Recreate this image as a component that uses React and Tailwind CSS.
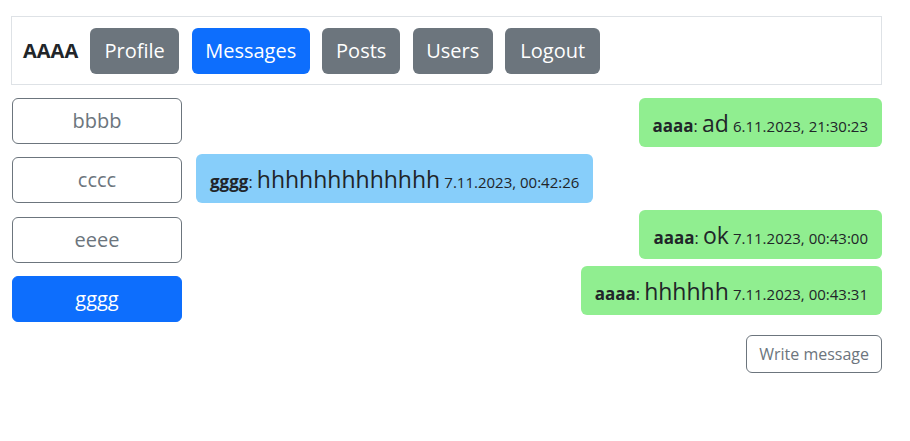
import React from 'react';

const navButtons = [
  { label: 'Profile', width: 'w-[89px]', active: false },
  { label: 'Messages', width: 'w-[118px]', active: true },
  { label: 'Posts', width: 'w-[78px]', active: false },
  { label: 'Users', width: 'w-[80px]', active: false },
  { label: 'Logout', width: 'w-[95px]', active: false },
];

const contacts = [
  { name: 'bbbb', active: false },
  { name: 'cccc', active: false },
  { name: 'eeee', active: false },
  { name: 'gggg', active: true },
];

const messages = [
  { from: 'aaaa', text: 'ad', date: '6.11.2023, 21:30:23', mine: true },
  { from: 'gggg', text: 'hhhhhhhhhhhhh', date: '7.11.2023, 00:42:26', mine: false },
  { from: 'aaaa', text: 'ok', date: '7.11.2023, 00:43:00', mine: true },
  { from: 'aaaa', text: 'hhhhhh', date: '7.11.2023, 00:43:31', mine: true },
];

const App = () => {
  return (
    <div
      className="w-[910px] h-[441px] bg-white text-[#212529] overflow-hidden"
      style={{ fontFamily: '"Open Sans", "Noto Sans", sans-serif' }}
    >
      {/* Top navigation */}
      <nav className="ml-[11px] mt-4 w-[871px] h-[69px] border border-[#dee2e6] flex items-center pl-[11px]">
        <span className="text-[20px] font-bold mr-[12px]">AAAA</span>
        <div className="flex gap-[12.5px]">
          {navButtons.map((b) => (
            <button
              key={b.label}
              className={`${b.width} h-[46px] rounded-md text-[20px] text-white flex items-center justify-center ${
                b.active ? 'bg-[#0d6efd]' : 'bg-[#6c757d]'
              }`}
            >
              {b.label}
            </button>
          ))}
        </div>
      </nav>

      <div className="flex mt-[13px] ml-3 w-[870px] gap-[14px]">
        {/* Contacts */}
        <div className="w-[170px] flex flex-col gap-[13.33px] shrink-0">
          {contacts.map((c) => (
            <button
              key={c.name}
              className={`h-[46px] rounded-md text-[20px] flex items-center justify-center ${
                c.active
                  ? 'bg-[#0d6efd] text-white border border-[#0d6efd]'
                  : 'border border-[#6c757d] text-[#6c757d] bg-white'
              }`}
            >
              {c.name}
            </button>
          ))}
        </div>

        {/* Conversation */}
        <div className="flex-1 flex flex-col">
          <div className="flex flex-col gap-[7px]">
            {messages.map((m, i) => (
              <div key={i} className={`flex ${m.mine ? 'justify-end' : 'justify-start'}`}>
                <div
                  className={`h-[49px] px-[14px] rounded-md flex items-center whitespace-nowrap ${
                    m.mine ? 'bg-[#90ee90]' : 'bg-[#87cefa]'
                  }`}
                >
                  <div className="leading-normal text-base pt-[2px]">
                    <span className="font-bold text-[17px]">{m.from}</span>:{' '}
                    <span className="text-[23px]">{m.text}</span>{' '}
                    <span className="text-[15px]">{m.date}</span>
                  </div>
                </div>
              </div>
            ))}
          </div>
          <div className="flex justify-end mt-5">
            <button className="h-[38px] px-[12px] rounded-md border border-[#6c757d] text-[#6c757d] text-base">
              Write message
            </button>
          </div>
        </div>
      </div>
    </div>
  );
};

export default App;
